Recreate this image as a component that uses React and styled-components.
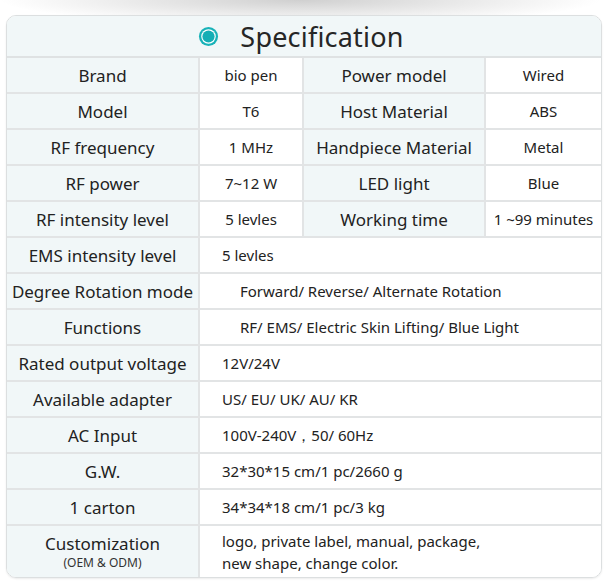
import styled, { createGlobalStyle } from "styled-components";

const GlobalStyle = createGlobalStyle`
  html, body {
    margin: 0;
    padding: 0;
    background: #ffffff;
  }
  body {
    font-family: "Noto Sans", "Open Sans", sans-serif;
    color: #222;
  }
`;

const specs = [
  ["Brand", "bio pen", "Power model", "Wired"],
  ["Model", "T6", "Host Material", "ABS"],
  ["RF frequency", "1 MHz", "Handpiece Material", "Metal"],
  ["RF power", "7~12 W", "LED light", "Blue"],
  ["RF intensity level", "5 levles", "Working time", "1 ~99 minutes"],
];

const wide = [
  ["EMS intensity level", "5 levles", 22],
  ["Degree Rotation mode", "Forward/ Reverse/ Alternate Rotation", 40],
  ["Functions", "RF/ EMS/ Electric Skin Lifting/ Blue Light", 40],
  ["Rated output voltage", "12V/24V", 22],
  ["Available adapter", "US/ EU/ UK/ AU/ KR", 22],
  ["AC Input", "100V-240V，50/ 60Hz", 22],
  ["G.W.", "32*30*15 cm/1 pc/2660 g", 22],
  ["1 carton", "34*34*18 cm/1 pc/3 kg", 22],
];

const Dot = () => (
  <svg width="21" height="21" viewBox="0 0 22 22">
    <circle cx="11" cy="11" r="10" fill="#18b2b8" />
    <circle cx="11" cy="11" r="7.6" fill="#ffffff" />
    <circle cx="11" cy="11" r="6.4" fill="#14aeb5" />
  </svg>
);

const App = () => {
  return (
    <Page>
      <GlobalStyle />
      <Table>
        <Title>
          <Dot />
          <TitleText>Specification</TitleText>
        </Title>
        {specs.map(([l1, v1, l2, v2]) => (
          <Row key={l1}>
            <Label>{l1}</Label>
            <Value>{v1}</Value>
            <Label>{l2}</Label>
            <Value $last>{v2}</Value>
          </Row>
        ))}
        {wide.map(([label, value, pad]) => (
          <Row key={label}>
            <Label>{label}</Label>
            <WideValue $pad={pad}>{value}</WideValue>
          </Row>
        ))}
        <Row $tall $end>
          <Label>
            <Stack>
              <Main>Customization</Main>
              <Small>(OEM &amp; ODM)</Small>
            </Stack>
          </Label>
          <WideValue $pad={22}>
            <Stack $left>
              <span>logo, private label, manual, package,</span>
              <span>new shape, change color.</span>
            </Stack>
          </WideValue>
        </Row>
      </Table>
    </Page>
  );
};

const Page = styled.div`
  width: 608px;
  height: 586px;
  box-sizing: border-box;
  padding: 15px 6px 0 6px;
  background: radial-gradient(
    ellipse 300px 24px at 300px 0px,
    rgba(150, 150, 150, 0.45),
    rgba(255, 255, 255, 0) 100%
  );
`;

const Table = styled.div`
  width: 596px;
  border: 1px solid #dcdfe0;
  border-radius: 10px;
  overflow: hidden;
  box-sizing: border-box;
  box-shadow: 0 1px 2px rgba(0, 0, 0, 0.08);
`;

const Title = styled.div`
  height: 42px;
  display: flex;
  align-items: center;
  justify-content: center;
  gap: 21px;
  padding-right: 6px;
  background: #f1f7f8;
  border-bottom: 2px solid #dfe2e3;
  box-sizing: border-box;
`;

const TitleText = styled.span`
  font-size: 27px;
  color: #262626;
  letter-spacing: 0.2px;
`;

const Row = styled.div`
  display: grid;
  grid-template-columns: 193px 104px 182px 1fr;
  height: ${(p) => (p.$tall ? "51px" : "36px")};
  border-bottom: ${(p) => (p.$end ? "none" : "2px solid #e2e4e5")};
  box-sizing: border-box;
`;

const Label = styled.div`
  display: flex;
  align-items: center;
  justify-content: center;
  background: #f1f7f8;
  border-right: 2px solid #e2e4e5;
  font-size: 17px;
  color: #222;
  white-space: nowrap;
`;

const Value = styled.div`
  display: flex;
  align-items: center;
  justify-content: center;
  background: #ffffff;
  border-right: ${(p) => (p.$last ? "none" : "2px solid #e2e4e5")};
  font-size: 15px;
  color: #222;
  white-space: nowrap;
`;

const WideValue = styled.div`
  grid-column: 2 / 5;
  display: flex;
  align-items: center;
  padding-left: ${(p) => p.$pad}px;
  background: #ffffff;
  font-size: 15px;
  color: #222;
  white-space: nowrap;
`;

const Stack = styled.div`
  display: flex;
  flex-direction: column;
  align-items: ${(p) => (p.$left ? "flex-start" : "center")};
  line-height: 22px;
  padding-top: ${(p) => (p.$left ? "0" : "2px")};
`;

const Main = styled.span`
  line-height: 20px;
`;

const Small = styled.span`
  font-size: 12px;
  line-height: 17px;
  color: #333;
`;

export default App;
